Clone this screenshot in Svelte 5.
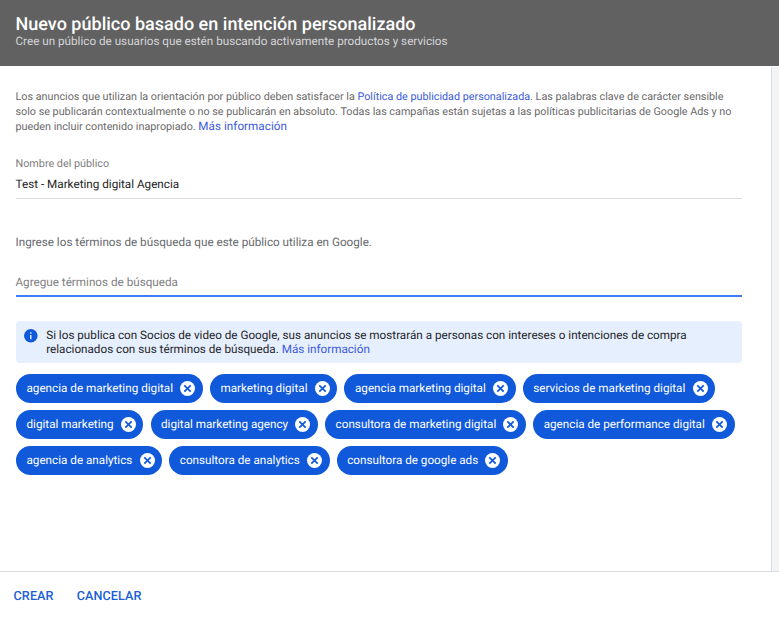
<script>
  const chipRows = [
    ['agencia de marketing digital', 'marketing digital', 'agencia marketing digital', 'servicios de marketing digital'],
    ['digital marketing', 'digital marketing agency', 'consultora de marketing digital', 'agencia de performance digital'],
    ['agencia de analytics', 'consultora de analytics', 'consultora de google ads'],
  ];
</script>

<div class="dialog">
  <header>
    <h1>Nuevo público basado en intención personalizado</h1>
    <p>Cree un público de usuarios que estén buscando activamente productos y servicios</p>
  </header>
  <div class="body">
    <main>
      <p class="policy">
        Los anuncios que utilizan la orientación por público deben satisfacer la <a href="#policy">Política de publicidad personalizada</a>. Las palabras clave de carácter sensible<br />
        solo se publicarán contextualmente o no se publicarán en absoluto. Todas las campañas están sujetas a las políticas publicitarias de Google Ads y no<br />
        pueden incluir contenido inapropiado. <a class="more" href="#more">Más información</a>
      </p>
      <div class="field name">
        <span class="label">Nombre del público</span>
        <span class="value">Test - Marketing digital Agencia</span>
      </div>
      <p class="hint">Ingrese los términos de búsqueda que este público utiliza en Google.</p>
      <div class="field search"><span>Agregue términos de búsqueda</span></div>
      <div class="notice">
        <svg width="14" height="14" viewBox="0 0 14 14">
          <circle cx="6.8" cy="6.8" r="6.8" fill="#1059da" />
          <path d="M6.1 3.3h1.4v1.4H6.1zM6.1 6h1.4v4.3H6.1z" fill="#e6effe" />
        </svg>
        <p>
          Si los publica con Socios de video de Google, sus anuncios se mostrarán a personas con intereses o intenciones de compra<br />
          relacionados con sus términos de búsqueda. <a href="#info">Más información</a>
        </p>
      </div>
      <div class="chips">
        {#each chipRows as row}
          <div class="row">
            {#each row as term}
              <span class="chip">
                <span class="term">{term}</span>
                <svg width="15" height="15" viewBox="0 0 15 15">
                  <circle cx="7.5" cy="7.5" r="7.5" fill="#fff" />
                  <path d="M4.3 4.3l6.4 6.4M10.7 4.3l-6.4 6.4" stroke="#1059da" stroke-width="1.7" />
                </svg>
              </span>
            {/each}
          </div>
        {/each}
      </div>
    </main>
    <aside></aside>
  </div>
  <footer>
    <button>CREAR</button>
    <button>CANCELAR</button>
  </footer>
</div>

<style>
  .dialog {
    width: 779px;
    height: 617px;
    display: flex;
    flex-direction: column;
    overflow: hidden;
    background: #fff;
    font-family: Roboto, 'Liberation Sans', sans-serif;
    font-size: 11.7px;
    line-height: 14px;
    white-space: nowrap;
    text-rendering: geometricPrecision;
  }
  p, h1 { margin: 0; }
  a { color: #3c5bdc; text-decoration: none; }
  header {
    height: 66px;
    flex: none;
    box-sizing: border-box;
    padding: 14px 15.5px 0;
    background: #616161;
    color: #fff;
  }
  h1 { margin-bottom: -2px; font-size: 18px; line-height: 22px; font-weight: 500; letter-spacing: 0.01px; }
  header p { color: #d5d5d9; }
  .body { flex: 1; display: flex; min-height: 0; }
  main { width: 726px; padding: 23px 29px 0 16px; }
  aside { flex: 1; margin-top: 1px; background: #f1f3f4; border-left: 1px solid #dadce0; }
  .policy { margin-left: -0.5px; font-size: 10.79px; line-height: 15px; color: #6a6a6a; }
  .policy .more { font-size: 11.7px; line-height: 14px; letter-spacing: 0.03px; }
  .field { display: flex; flex-direction: column; }
  .name { margin-top: 23px; height: 41px; border-bottom: 1px solid #dedede; }
  .label { margin-left: -0.5px; font-size: 10.8px; color: #808080; }
  .value { margin: 6px 0 0 -0.4px; color: #242424; }
  .hint { margin: 36px 0 0 -0.5px; color: #66696d; }
  .search { margin-top: 26px; height: 20px; border-bottom: 2px solid #407bfa; color: #808080; }
  .search span { margin-left: -0.5px; }
  .notice {
    display: flex;
    gap: 8.2px;
    margin-top: 24px;
    height: 42px;
    padding: 7px 8px;
    box-sizing: border-box;
    background: #e6effe;
    border-radius: 4px;
    color: #252629;
  }
  .notice svg { margin-top: 1px; flex: none; }
  .chips { display: flex; flex-direction: column; gap: 7px; margin-top: 11px; }
  .row { display: flex; gap: 7.2px; }
  .chip {
    display: flex;
    align-items: center;
    gap: 7.2px;
    height: 29px;
    padding: 0 7.6px 0 10.5px;
    border-radius: 15px;
    background: #1059da;
    color: #fff;
  }
  .term { padding-bottom: 1px; }
  footer {
    height: 46px;
    flex: none;
    box-sizing: border-box;
    border-top: 1px solid #dadce0;
    padding: 17px 13.5px 0;
    display: flex;
    align-items: flex-start;
    gap: 23px;
  }
  button {
    padding: 0;
    border: 0;
    background: none;
    color: #1a5fd8;
    font: 500 12.6px/15px Roboto, 'Liberation Sans', sans-serif;
    letter-spacing: 0.12px;
    text-rendering: geometricPrecision;
  }
</style>
